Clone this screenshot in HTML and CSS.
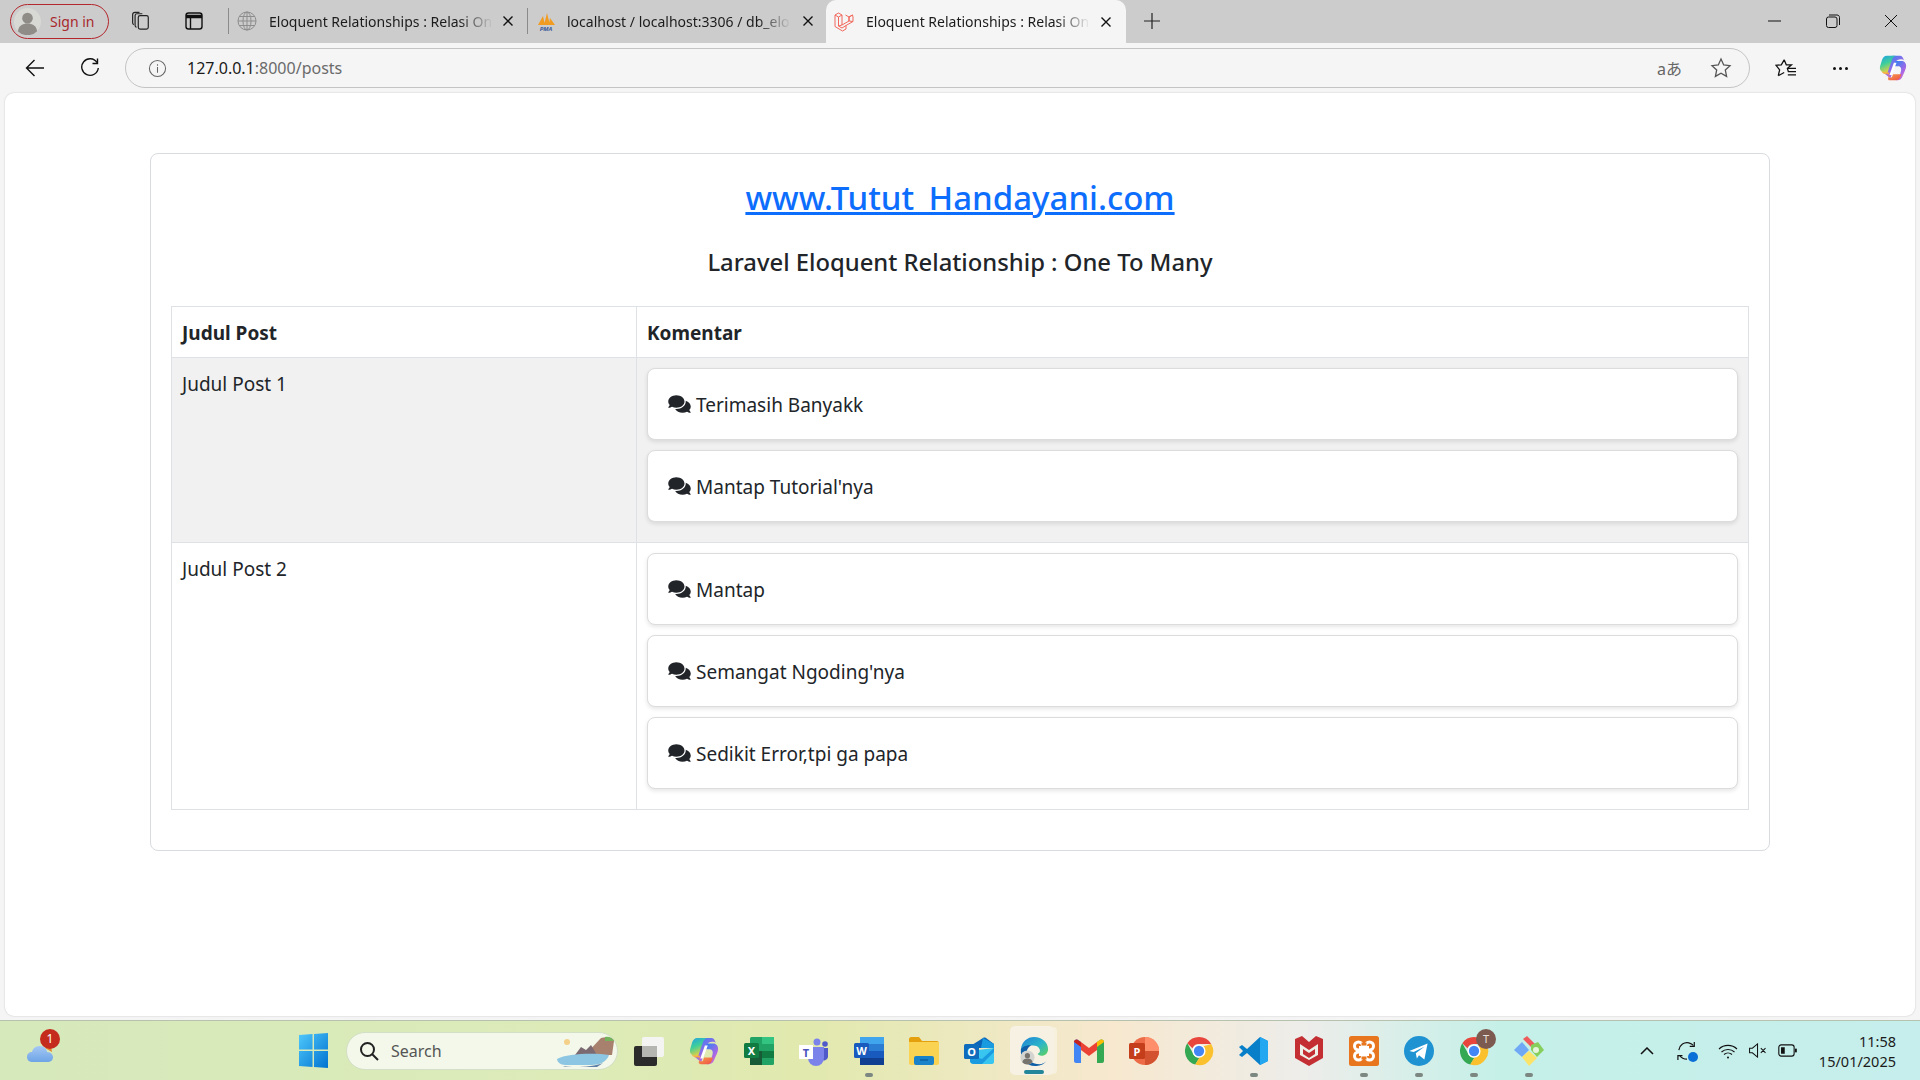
FILE: index.html
```html
<!DOCTYPE html>
<html lang="id">
<head>
    <meta charset="UTF-8">
    <title>Eloquent Relationships : Relasi One To Many</title>
    <link rel="stylesheet" href="styles.css">
</head>
<body>

<svg class="defs" width="0" height="0" aria-hidden="true">
    <defs>
        <linearGradient id="copA" x1="0" y1="0" x2=".4" y2="1">
            <stop offset="0" stop-color="#1f9fe8"/>
            <stop offset=".5" stop-color="#3fcf9a"/>
            <stop offset="1" stop-color="#f4d03a"/>
        </linearGradient>
        <linearGradient id="copB" x1=".3" y1="0" x2="1" y2="1">
            <stop offset="0" stop-color="#3f7ff0"/>
            <stop offset=".55" stop-color="#a768e6"/>
            <stop offset="1" stop-color="#ec74b8"/>
        </linearGradient>
        <linearGradient id="copC" x1="0" y1="0" x2="1" y2="1">
            <stop offset="0" stop-color="#f9c04a"/>
            <stop offset="1" stop-color="#ef4f46"/>
        </linearGradient>
        <linearGradient id="winG" x1="0" y1="0" x2="1" y2="1">
            <stop offset="0" stop-color="#4fc8fb"/>
            <stop offset="1" stop-color="#0073d0"/>
        </linearGradient>
        <linearGradient id="edgeG" x1="0" y1="0" x2="1" y2="1">
            <stop offset="0" stop-color="#1f7fd6"/>
            <stop offset=".55" stop-color="#2bb5c9"/>
            <stop offset="1" stop-color="#5fd35c"/>
        </linearGradient>
        <linearGradient id="cloudG" x1="0" y1="0" x2="0" y2="1">
            <stop offset="0" stop-color="#a5c8f5"/>
            <stop offset="1" stop-color="#6ea4e6"/>
        </linearGradient>
        <symbol id="copilot" viewBox="0 0 32 32">
            <path d="M24 2h-8c-3 0-4.500 2-5.500 5L6 22l7 6 6-18c1-3 3-4 6-4 1.500 0 3 .5 3.500 1.500C27.800 4 26 2 24 2z" fill="url(#copB)"/>
            <path d="M19 8h7c3 0 5 2.500 5 5.500 0 2-.5 3.500-1.500 6L27 25c-1 3-3 5-6 5h-2c2 0 3.500-2 4.500-5L25 20c1-3 0-6-3-6l-5 0z" fill="url(#copB)"/>
            <path d="M13 2H9C6 2 4.500 4 3.500 6.500L1.500 13C.5 16 1 18 3 20l3 2 3.500 0 4.500-13c.8-3 2-6 5-7z" fill="url(#copA)"/>
            <path d="M3 20c1 2 3 3 5 3h4l-1.500 4c-.5 1.500 0 3 2 3h7c2.500 0 4-1.500 5-4l1-3h-7l-2.500 0-1 3c-.5 1-1.200 1-2 1-2 0-2.500-1-2-3l1-3H8c-2 0-4-.5-5-1z" fill="url(#copC)"/>
            <path d="M12 24l5-14h3l-5 14z" fill="#fff"/>
        </symbol>
        <symbol id="chrome" viewBox="0 0 32 32">
            <path d="M16 1a15 15 0 0 1 13 7.500H16a7.500 7.500 0 0 0-7 4.500L3.500 7.800A15 15 0 0 1 16 1z" fill="#e8453c"/>
            <path d="M3.500 7.800L9.600 18.500a7.500 7.500 0 0 0 6.900 5L12 30.500A15 15 0 0 1 3.500 7.800z" fill="#34a853"/>
            <path d="M29 8.500A15 15 0 0 1 12 30.500l6.300-10.900a7.500 7.500 0 0 0 .2-7.900z" fill="#fbc02d"/>
            <circle cx="16" cy="16" r="7" fill="#fff"/>
            <circle cx="16" cy="16" r="5.500" fill="#4285f4"/>
        </symbol>
        <symbol id="comments" viewBox="0 0 576 512">
            <path fill="currentColor" d="M416 192c0-88.400-93.100-160-208-160S0 103.600 0 192c0 34.300 14.100 65.900 38 92-13.400 30.200-35.500 54.200-35.800 54.500-2.200 2.300-2.800 5.700-1.500 8.700S4.800 352 8 352c36.600 0 66.900-12.300 88.700-25 32.200 15.700 70.300 25 111.300 25 114.900 0 208-71.600 208-160zm122 220c23.900-26 38-57.700 38-92 0-66.900-53.500-124.200-129.300-148.100.9 6.600 1.300 13.300 1.300 20.100 0 105.900-107.700 192-240 192-10.800 0-21.300-.8-31.700-1.900C207.800 439.600 281.800 480 368 480c41 0 79.100-9.200 111.300-25 21.800 12.700 52.100 25 88.700 25 3.200 0 6.100-1.900 7.300-4.800 1.300-2.900.7-6.300-1.500-8.700-.3-.3-22.400-24.200-35.800-54.500z"/>
        </symbol>
    </defs>
</svg>

<div class="tabstrip">
    <div class="signin">
        <svg class="avatar" viewBox="0 0 28 28"><circle cx="14" cy="14" r="14" fill="#d8d8d4"/><circle cx="14" cy="10.500" r="5.500" fill="#8f8c88"/><path d="M4 24c1-6 5-8 10-8s9 2 10 8a14 14 0 0 1-20 0z" fill="#8f8c88"/></svg>
        <span>Sign in</span>
    </div>
    <svg class="strip-icon workspaces" viewBox="0 0 22 22" fill="none" stroke="#222" stroke-width="1.300"><rect x="8" y="5" width="11" height="15" rx="2"/><path d="M6 18c-1-.5-1.500-1-1.500-2V5c0-1 1-2 2-2h6"/><path d="M3 15c-.8-.5-1.200-1-1.200-2V4c0-1.500 1-2.500 2.500-2.500h5"/></svg>
    <svg class="strip-icon vtabs" viewBox="0 0 20 20" fill="none" stroke="#111" stroke-width="1.400"><rect x="2" y="2" width="16" height="16" rx="2.500"/><path d="M2 5.500h16" stroke-width="3.500"/><path d="M6.500 6v12"/></svg>
    <i class="divider first"></i>
    <div class="tab tab-one">
        <svg class="fav" viewBox="0 0 20 20" fill="none" stroke="#8d8d8d" stroke-width="1"><circle cx="10" cy="10" r="9"/><ellipse cx="10" cy="10" rx="4" ry="9"/><path d="M1 10h18M2.200 5.500h15.600M2.200 14.500h15.600M10 1v18"/></svg>
        <span class="tab-title">Eloquent Relationships : Relasi On</span>
        <svg class="close" viewBox="0 0 12 12"><path d="M1.500 1.500l9 9M10.500 1.500l-9 9" stroke="#111" stroke-width="1.400"/></svg>
    </div>
    <i class="divider"></i>
    <div class="tab tab-two">
        <svg class="fav" viewBox="0 0 20 20"><path d="M2 14L7 5l2 9zM8 14l3-12 3 12zM13 14l1-7 5 7z" fill="#f29b21"/><text x="10" y="19.500" class="pma">PMA</text></svg>
        <span class="tab-title">localhost / localhost:3306 / db_elo</span>
        <svg class="close" viewBox="0 0 12 12"><path d="M1.500 1.500l9 9M10.500 1.500l-9 9" stroke="#111" stroke-width="1.400"/></svg>
    </div>
    <div class="tab tab-active">
        <svg class="fav" viewBox="0 0 20 20" fill="none" stroke="#f2675c" stroke-width="1"><path d="M1 3l3.500-2L8 3v10l7-4V5l3.500-2L19 5v4.500l-7 4V17l-3.500 2L1 14.500zM1 3l3.500 2L8 3M4.500 5v9l3.500 2 4-2.500M15 5l-3.500-2M15 5l3.500-2M15 5v4l4 .5M8 13l-3.500 1"/></svg>
        <span class="tab-title">Eloquent Relationships : Relasi On</span>
        <svg class="close" viewBox="0 0 12 12"><path d="M1.500 1.500l9 9M10.500 1.500l-9 9" stroke="#111" stroke-width="1.400"/></svg>
    </div>
    <svg class="new-tab" viewBox="0 0 16 16"><path d="M8 0v16M0 8h16" stroke="#222" stroke-width="1.200"/></svg>
    <div class="window-btns">
        <svg viewBox="0 0 14 14"><path d="M0 7h13" stroke="#111" stroke-width="1"/></svg>
        <svg viewBox="0 0 14 14" fill="none" stroke="#111" stroke-width="1"><rect x=".5" y="3" width="10.500" height="10.500" rx="2"/><path d="M3 1h8c1.500 0 2.500 1 2.500 2.500V11"/></svg>
        <svg viewBox="0 0 14 14"><path d="M1 1l12 12M13 1L1 13" stroke="#111" stroke-width="1"/></svg>
    </div>
</div>

<div class="toolbar">
    <svg class="nav-icon back" viewBox="0 0 20 20" fill="none" stroke="#111" stroke-width="1.400"><path d="M19 10H1.500M9.500 2l-8 8 8 8"/></svg>
    <svg class="nav-icon reload" viewBox="0 0 20 20" fill="none" stroke="#111" stroke-width="1.400"><path d="M17 4.500A8.300 8.300 0 1 0 18.300 10"/><path d="M17.500 .5v5h-5"/></svg>
    <div class="address">
        <svg class="info" viewBox="0 0 20 20" fill="none" stroke="#666" stroke-width="1.100"><circle cx="10" cy="10" r="8.500"/><path d="M10 8.500v6M10 5.500v1.500"/></svg>
        <span class="url"><b>127.0.0.1</b>:8000/posts</span>
        <span class="translate">aあ</span>
        <svg class="star" viewBox="0 0 22 22" fill="none" stroke="#555" stroke-width="1.300"><path d="M11 2l2.700 6 6.300.7-4.700 4.300 1.300 6.400L11 16.200l-5.600 3.200 1.300-6.400L2 8.700 8.300 8z"/></svg>
    </div>
    <svg class="tool-icon favs" viewBox="0 0 24 22" fill="none" stroke="#111" stroke-width="1.400"><path d="M10 2l2.300 5.500H18l-4.500 4 1 3M3.500 19.500l1.500-6.500L1 8l5.800-.5L10 2M3.500 19.500L10 16"/><path d="M14 11.500h9M14 15h9M14 18.500h9"/></svg>
    <span class="dots"><i></i><i></i><i></i></span>
    <svg class="tool-copilot"><use href="#copilot"/></svg>
</div>

<main class="page">
    <div class="card">
        <h3 class="site"><a href="#">www.Tutut_Handayani.com</a></h3>
        <h5 class="subtitle">Laravel Eloquent Relationship : One To Many</h5>
        <table class="posts">
            <thead>
                <tr>
                    <th class="col-judul">Judul Post</th>
                    <th>Komentar</th>
                </tr>
            </thead>
            <tbody>
                <tr class="striped">
                    <td class="judul">Judul Post 1</td>
                    <td>
                        <div class="comment"><svg class="ico"><use href="#comments"/></svg> Terimasih Banyakk</div>
                        <div class="comment"><svg class="ico"><use href="#comments"/></svg> Mantap Tutorial'nya</div>
                    </td>
                </tr>
                <tr>
                    <td class="judul">Judul Post 2</td>
                    <td>
                        <div class="comment"><svg class="ico"><use href="#comments"/></svg> Mantap</div>
                        <div class="comment"><svg class="ico"><use href="#comments"/></svg> Semangat Ngoding'nya</div>
                        <div class="comment"><svg class="ico"><use href="#comments"/></svg> Sedikit Error,tpi ga papa</div>
                    </td>
                </tr>
            </tbody>
        </table>
    </div>
</main>

<footer class="taskbar">
    <div class="weather">
        <svg viewBox="0 0 34 30"><path d="M20 12l6-3 1 7z" fill="#e8862e"/><path d="M8 26c-4 0-6-2-6-5 0-3 2-5 5-5 1-4 4-6 8-6 4 0 7 3 7 6 4 0 6 3 6 5 0 3-2 5-6 5z" fill="url(#cloudG)"/></svg>
        <span class="badge">1</span>
    </div>
    <div class="task-slot">
        <svg class="winlogo" viewBox="0 0 30 36"><path d="M0 2l14-1v16H0zM15.500 1L30 0v17H15.500zM0 18.500h14V35L0 34zM15.500 18.500H30V36l-14.500-1z" fill="url(#winG)"/></svg>
    </div>
    <div class="search">
        <svg class="lens" viewBox="0 0 20 20" fill="none" stroke="#222" stroke-width="2"><circle cx="8.500" cy="8.500" r="6.500"/><path d="M13 13l6 6"/></svg>
        <span>Search</span>
        <svg class="scene" viewBox="0 0 60 32"><circle cx="12" cy="7" r="3" fill="#f5d08a"/><path d="M46 3c6-2 12 0 13 3l-2 14H30z" fill="#a8806e"/><path d="M50 2c4-1 8 1 9 4h-9z" fill="#74b35c"/><path d="M20 20l6-8 5 3 5-5 6 10z" fill="#7c6a72"/><path d="M2 24c10-6 40-6 52-4-2 6-8 10-18 10H10C6 30 2 27 2 24z" fill="#8cc6e2"/><path d="M8 31c10 2 30 1 40-3l-6 4H10z" fill="#5f7fa6"/></svg>
    </div>
    <div class="task-slot">
        <svg viewBox="0 0 30 30"><rect x="8" y="1" width="22" height="20" rx="2" fill="#f4f4f2"/><rect y="10" width="23" height="20" rx="2" fill="#2b2b2b"/><rect x="8" y="10" width="15" height="11" fill="#b5b5b2"/></svg>
    </div>
    <div class="task-slot"><svg class="big"><use href="#copilot"/></svg></div>
    <div class="task-slot">
        <svg viewBox="0 0 30 30"><rect x="6" y="1" width="24" height="28" rx="1.500" fill="#21a366"/><rect x="18" y="1" width="12" height="7" fill="#33c481"/><rect x="18" y="15" width="12" height="7" fill="#107c41"/><rect x="6" y="15" width="12" height="14" fill="#185c37"/><rect y="7" width="15" height="15" rx="1.500" fill="#107c41"/><text x="7.500" y="19" class="app-letter">X</text></svg>
    </div>
    <div class="task-slot">
        <svg viewBox="0 0 30 30"><circle cx="18" cy="6" r="3.500" fill="#7b83eb"/><circle cx="26" cy="8" r="2.800" fill="#5059c9"/><path d="M22 12h7v9a4 4 0 0 1-7 2z" fill="#5059c9"/><path d="M9 11h16v11a7 7 0 0 1-16 0z" fill="#7b83eb"/><rect y="9" width="14" height="14" fill="#fff"/><text x="7" y="21" class="app-letter teams">T</text></svg>
    </div>
    <div class="task-slot running">
        <svg viewBox="0 0 30 30"><rect x="6" y="1" width="24" height="28" rx="1.500" fill="#2b7cd3"/><rect x="6" y="1" width="24" height="7" fill="#41a5ee"/><rect x="6" y="15" width="24" height="7" fill="#185abd"/><rect x="6" y="22" width="24" height="7" fill="#103f91"/><rect y="7" width="15" height="15" rx="1.500" fill="#185abd"/><text x="7.500" y="19" class="app-letter">W</text></svg>
    </div>
    <div class="task-slot">
        <svg viewBox="0 0 30 28"><path d="M0 2c0-1 1-2 2-2h8l3 4h15c1 0 2 1 2 2v4H0z" fill="#e5a00d"/><path d="M0 5h30v21c0 1-1 2-2 2H2c-1 0-2-1-2-2z" fill="#fbd353"/><rect x="5" y="19" width="20" height="9" rx="2" fill="#1a82c9"/><path d="M11 23h8" stroke="#0d5ea0" stroke-width="1.400"/></svg>
    </div>
    <div class="task-slot">
        <svg viewBox="0 0 30 28"><path d="M8 8l11-7c1-.6 2-.6 3 0l8 6v4H8z" fill="#0a64b8"/><path d="M19 1l11 6v4H17z" fill="#1a9be0"/><path d="M6 14l24-3v14c0 1-1 2-2 2H10c-2 0-4-1-4-3z" fill="#38c5f0"/><path d="M6 18l12 4 12-11v4L18 27H10c-2 0-4-1-4-3z" fill="#1a9be0"/><rect y="7" width="15" height="15" rx="1.500" fill="#0f6cbd"/><text x="7.500" y="19" class="app-letter">O</text></svg>
    </div>
    <div class="task-slot edge-active">
        <svg viewBox="0 0 32 32"><path d="M2 14C3 6 9 1 16 1c9 0 15 6 15 13 0 4-3 7-7 7-2 0-4-1-4-2 2-1 3-3 2-5-1-3-4-4-7-4-6 0-11 3-13 4z" fill="url(#edgeG)"/><path d="M2 14c1-2 6-5 11-4-4 2-6 6-4 12 1 4 5 8 13 8 3 0 5-1 7-3-3 4-8 5-12 5C8 32 1 24 2 14z" fill="#0f5fa8"/><circle cx="9" cy="23" r="7.500" fill="#d3d3cf"/><circle cx="9" cy="21" r="2.800" fill="#77736e"/><path d="M3.500 28c.5-3 3-4 5.500-4s5 1 5.500 4a7.500 7.500 0 0 1-11 0z" fill="#77736e"/></svg>
    </div>
    <div class="task-slot">
        <svg viewBox="0 0 30 24"><path d="M0 3c0-2 2-3 4-2l3 2v21H2c-1 0-2-1-2-2z" fill="#4285f4"/><path d="M30 3c0-2-2-3-4-2l-3 2v21h5c1 0 2-1 2-2z" fill="#34a853"/><path d="M7 3l8 6 8-6v8l-8 6-8-6z" fill="#ea4335"/><path d="M0 3l7 5V3L4 1C2 0 0 1 0 3z" fill="#c5221f"/><path d="M23 3v5l7-5c0-2-2-3-4-2z" fill="#fbbc04"/></svg>
    </div>
    <div class="task-slot">
        <svg viewBox="0 0 30 30"><circle cx="16" cy="15" r="14" fill="#ed6c47"/><path d="M16 1a14 14 0 0 1 14 14H16z" fill="#ff8f6b"/><path d="M16 15h14a14 14 0 0 1-14 14z" fill="#d35230"/><rect y="7" width="16" height="16" rx="1.500" fill="#c43e1c"/><text x="8" y="20" class="app-letter">P</text></svg>
    </div>
    <div class="task-slot"><svg class="big"><use href="#chrome"/></svg></div>
    <div class="task-slot running">
        <svg viewBox="0 0 30 30"><path d="M21 1l8 4v20l-8 4-13-12-5 4-3-2 4-4-4-4 3-2 5 4z" fill="#0a7fc9"/><path d="M21 1l8 4v20l-8 4z" fill="#22a7f0"/></svg>
    </div>
    <div class="task-slot">
        <svg viewBox="0 0 28 30"><path d="M0 3l7-3 7 6 7-6 7 3v19l-14 8-14-8z" fill="#c32f33"/><path d="M5 8l9 6 9-6v11l-9 5-9-5z" fill="#eef1e8"/><path d="M8 13l6 4 6-4v5l-6 4-6-4z" fill="#c32f33"/></svg>
    </div>
    <div class="task-slot running">
        <svg viewBox="0 0 30 30"><rect width="30" height="30" rx="2.500" fill="#e8761e"/><circle cx="9.500" cy="10" r="4" fill="none" stroke="#fff" stroke-width="3"/><circle cx="20.500" cy="10" r="4" fill="none" stroke="#fff" stroke-width="3"/><circle cx="9.500" cy="20" r="4" fill="none" stroke="#fff" stroke-width="3"/><circle cx="20.500" cy="20" r="4" fill="none" stroke="#fff" stroke-width="3"/><rect x="10" y="10" width="10" height="10" fill="#fff"/><rect x="12.500" y="6.500" width="5" height="3" fill="#e8761e"/><rect x="12.500" y="20.500" width="5" height="3" fill="#e8761e"/></svg>
    </div>
    <div class="task-slot running">
        <svg viewBox="0 0 28 28"><circle cx="14" cy="14" r="14" fill="#1f93d2"/><path d="M5 14l17-7-3 15-5-4-2 3-1-5 8-6-10 5z" fill="#fff"/></svg>
    </div>
    <div class="task-slot running chrome-profile">
        <svg class="big"><use href="#chrome"/></svg>
        <span class="profile-dot">T</span>
    </div>
    <div class="task-slot running">
        <svg viewBox="0 0 30 30"><path d="M9 3l4-3 8 8-4 3z" fill="#ef5a5a"/><path d="M8 6l7 8-7 7-8-7z" fill="#6fa8f5"/><path d="M17 9l7-3 6 8-7 7-6-7z" fill="#86cf5c"/><path d="M8 21l7-6 8 7-8 8z" fill="#fbe36a"/><circle cx="22" cy="14" r="3" fill="#e5f5dc"/></svg>
    </div>
    <div class="tray">
        <svg class="chev" viewBox="0 0 14 8" fill="none" stroke="#111" stroke-width="1.500"><path d="M1 7l6-6 6 6"/></svg>
        <div class="sync">
            <svg viewBox="0 0 22 22" fill="none" stroke="#111" stroke-width="1.300"><path d="M2 10C3 4 8 1 13 2c2 .5 4 1.500 5 3"/><path d="M19 1v5h-5"/><path d="M3 16c2 3 5 4 8 4"/><path d="M1 21v-5h5"/></svg>
            <i></i>
        </div>
        <svg class="wifi" viewBox="0 0 20 16" fill="none" stroke="#111" stroke-width="1.100"><path d="M1 6a13 13 0 0 1 18 0M3.500 9a9.500 9.500 0 0 1 13 0M6 11.500a6 6 0 0 1 8 0"/><circle cx="10" cy="14.500" r="1" fill="#111" stroke="none"/></svg>
        <svg class="mute" viewBox="0 0 20 16" fill="none" stroke="#111" stroke-width="1.100"><path d="M1 5.500h3L9.500 1v14L4 10.500H1zM13 5.500l5 5M18 5.500l-5 5"/></svg>
        <svg class="battery" viewBox="0 0 21 14" fill="none" stroke="#111" stroke-width="1.200"><rect x=".6" y="1" width="16.500" height="12" rx="2.500"/><rect x="3" y="3.500" width="4" height="7" fill="#111" stroke="none"/><path d="M19 5v4" stroke-width="2"/></svg>
        <div class="clock">
            <span>11:58</span>
            <span>15/01/2025</span>
        </div>
    </div>
</footer>

</body>
</html>
```

FILE: styles.css
```css
* {
    box-sizing: border-box;
}
html, body {
    height: 100%;
}
body {
    margin: 0;
    display: flex;
    flex-direction: column;
    height: 1080px;
    overflow: hidden;
    background-color: #f5f5f5;
    font-family: "Noto Sans", "Open Sans", sans-serif;
    color: #212529;
}
svg {
    display: block;
    flex: none;
}
.defs {
    position: absolute;
}

/* barra de pestañas */
.tabstrip {
    display: flex;
    align-items: center;
    height: 43px;
    padding-bottom: 1px;
    background-color: #cccccc;
    font-size: 14px;
    color: #1c1c1c;
}
.signin {
    display: flex;
    align-items: center;
    gap: 9px;
    width: 99px;
    height: 35px;
    margin-left: 10px;
    padding-left: 3px;
    border: 1.500px solid #b3262b;
    border-radius: 18px;
    color: #a8282c;
}
.avatar {
    width: 27px;
    height: 27px;
}
.strip-icon {
    width: 20px;
    height: 20px;
}
.workspaces {
    margin-left: 22px;
}
.vtabs {
    margin-left: 33px;
}
.divider {
    width: 1px;
    height: 26px;
    background-color: #8a8a8a;
}
.divider.first {
    margin-left: 24px;
}
.tab {
    display: flex;
    align-items: center;
    height: 43px;
}
.fav {
    width: 20px;
    height: 20px;
}
.tab-title {
    overflow: hidden;
    white-space: nowrap;
    -webkit-mask-image: linear-gradient(to right, #000 85%, transparent);
    mask-image: linear-gradient(to right, #000 85%, transparent);
}
.close {
    width: 12px;
    height: 12px;
}
.tab-one {
    width: 298px;
    padding-left: 8px;
}
.tab-one .tab-title {
    width: 224px;
    margin-left: 12px;
}
.tab-one .close {
    margin-left: 9px;
}
.tab-two {
    width: 298px;
    padding-left: 8px;
}
.tab-two .tab-title {
    width: 224px;
    margin-left: 11px;
}
.tab-two .close {
    margin-left: 11px;
}
.tab-active {
    width: 300px;
    margin-top: 1px;
    padding-left: 8px;
    background-color: #f5f5f5;
    border-radius: 10px 10px 0 0;
}
.tab-active .tab-title {
    width: 224px;
    margin-left: 12px;
}
.tab-active .close {
    margin-left: 10px;
}
.pma {
    font-size: 6px;
    font-weight: 700;
    font-style: italic;
    text-anchor: middle;
    fill: #3d5a98;
}
.new-tab {
    width: 16px;
    height: 16px;
    margin-left: 18px;
}
.window-btns {
    display: flex;
    gap: 44px;
    margin-left: auto;
    padding-right: 22px;
}
.window-btns svg {
    width: 14px;
    height: 14px;
}

/* barra de direcciones */
.toolbar {
    display: flex;
    align-items: center;
    height: 50px;
    flex: none;
}
.nav-icon {
    width: 20px;
    height: 20px;
}
.back {
    margin-left: 25px;
}
.reload {
    margin-left: 35px;
}
.address {
    display: flex;
    align-items: center;
    width: 1625px;
    height: 40px;
    margin-left: 25px;
    padding-left: 22px;
    padding-right: 17px;
    border: 1.500px solid #c4c4c4;
    border-radius: 20px;
    font-size: 16px;
    color: #6b6b6b;
}
.info {
    width: 19px;
    height: 19px;
}
.url {
    margin-left: 20px;
}
.url b {
    font-weight: 400;
    color: #1a1a1a;
}
.translate {
    margin-left: auto;
    font-family: "Noto Sans", "Noto Sans CJK JP", sans-serif;
    font-size: 16px;
    color: #666;
}
.star {
    width: 22px;
    height: 22px;
    margin-left: 28px;
}
.tool-icon {
    width: 22px;
    height: 20px;
    margin-left: 25px;
}
.dots {
    display: flex;
    gap: 3px;
    margin-left: 36px;
}
.dots i {
    width: 3px;
    height: 3px;
    border-radius: 50%;
    background-color: #111;
}
.tool-copilot {
    width: 28px;
    height: 28px;
    margin-left: 31px;
}

/* contenido */
.page {
    flex: 1;
    margin: 0 5px;
    padding: 60px 145px 0;
    background-color: #fff;
    border-radius: 9px;
    box-shadow: 0 0 2px rgba(0, 0, 0, .2);
}
.card {
    padding: 20px;
    border: 1px solid #d8dbdf;
    border-radius: 8px;
    background: #fff;
}
.site {
    margin: 3px 0 28px;
    font-size: 33px;
    font-weight: 500;
    line-height: 42px;
    text-align: center;
}
.site a {
    color: #0d6efd;
}
.subtitle {
    margin: 0 0 29px;
    font-size: 23.800px;
    font-weight: 500;
    line-height: 30px;
    text-align: center;
}
.posts {
    width: 100%;
    margin-bottom: 20px;
    border-collapse: collapse;
    font-size: 19px;
    line-height: 30px;
}
.posts th, .posts td {
    padding: 10px;
    border: 1px solid #dee2e6;
    text-align: left;
    vertical-align: top;
}
.posts th, .posts td.judul {
    padding-top: 11px;
    padding-bottom: 9px;
}
.col-judul {
    width: 465px;
}
.striped td {
    background-color: #f1f1f1;
}
.comment {
    display: flex;
    align-items: center;
    gap: 5px;
    height: 72px;
    margin-bottom: 10px;
    padding: 21px 20px 19px;
    border: 1px solid #dcdcdc;
    border-radius: 8px;
    background: #fff;
    box-shadow: 0 2px 4px rgba(0, 0, 0, .1);
}
.ico {
    width: 23px;
    height: 20px;
    margin-top: -2px;
    color: #212529;
}

/* barra de tareas */
.taskbar {
    display: flex;
    align-items: center;
    flex: none;
    height: 60px;
    margin-top: 4px;
    border-top: 1px solid #b7c2ae;
    background: linear-gradient(to right, #d6e9bb 0%, #dcebb8 30%, #e1e9ae 42%, #f7e8cf 58%, #ededea 68%, #c5f0e8 78%, #c6eeec 100%);
}
.weather {
    position: relative;
    width: 34px;
    height: 30px;
    margin-left: 25px;
    margin-right: 227px;
}
.badge {
    position: absolute;
    top: -7px;
    left: 15px;
    width: 20px;
    height: 20px;
    border-radius: 50%;
    background-color: #c42b1c;
    color: #fff;
    font-size: 12px;
    line-height: 20px;
    text-align: center;
}
.task-slot {
    position: relative;
    display: flex;
    align-items: center;
    justify-content: center;
    width: 55px;
    height: 59px;
}
.task-slot svg {
    position: relative;
    width: 30px;
    height: 30px;
}
.task-slot svg.winlogo {
    width: 29px;
    height: 35px;
}
.running::after {
    content: "";
    position: absolute;
    bottom: 3px;
    left: 24px;
    width: 8px;
    height: 4px;
    border-radius: 2px;
    background-color: #7c8782;
}
.edge-active::before {
    content: "";
    position: absolute;
    top: 5px;
    bottom: 5px;
    left: 4px;
    width: 44px;
    border-radius: 5px;
    background-color: #f6f1e2;
    box-shadow: 4px 0 0 -1px rgba(246, 241, 226, .8);
}
.edge-active::after {
    content: "";
    position: absolute;
    bottom: 6px;
    left: 18px;
    width: 20px;
    height: 4px;
    border-radius: 2px;
    background-color: #24869a;
}
.app-letter {
    fill: #fff;
    font-size: 11px;
    font-weight: 700;
    text-anchor: middle;
}
.app-letter.teams {
    fill: #4b53bc;
}
.profile-dot {
    position: absolute;
    top: 8px;
    left: 30px;
    width: 20px;
    height: 20px;
    border-radius: 50%;
    background-color: #7d5a50;
    color: #e8e0dc;
    font-size: 11px;
    line-height: 20px;
    text-align: center;
}
.search {
    display: flex;
    align-items: center;
    width: 272px;
    height: 38px;
    margin-left: 5px;
    margin-right: 3px;
    padding-left: 12px;
    border: 1px solid #d3dfc6;
    border-radius: 19px;
    background-color: #f3f8ea;
    font-size: 16px;
    color: #555;
}
.lens {
    width: 20px;
    height: 20px;
    margin-right: 12px;
}
.scene {
    width: 60px;
    height: 32px;
    margin-left: auto;
    margin-right: 2px;
}
.tray {
    display: flex;
    align-items: center;
    margin-left: auto;
    padding-right: 24px;
}
.chev {
    width: 14px;
    height: 8px;
}
.sync {
    position: relative;
    width: 20px;
    height: 20px;
    margin-left: 23px;
}
.sync svg {
    width: 20px;
    height: 20px;
}
.sync i {
    position: absolute;
    right: -1px;
    bottom: -1px;
    width: 10px;
    height: 10px;
    border-radius: 50%;
    background-color: #0a6fd6;
}
.wifi {
    width: 20px;
    height: 16px;
    margin-left: 21px;
}
.mute {
    width: 20px;
    height: 15px;
    margin-left: 10px;
}
.battery {
    width: 20px;
    height: 13px;
    margin-left: 10px;
}
.clock {
    display: flex;
    flex-direction: column;
    align-items: flex-end;
    width: 90px;
    margin-left: 8px;
    font-size: 14.500px;
    line-height: 20px;
    color: #1a1a1a;
}
```
